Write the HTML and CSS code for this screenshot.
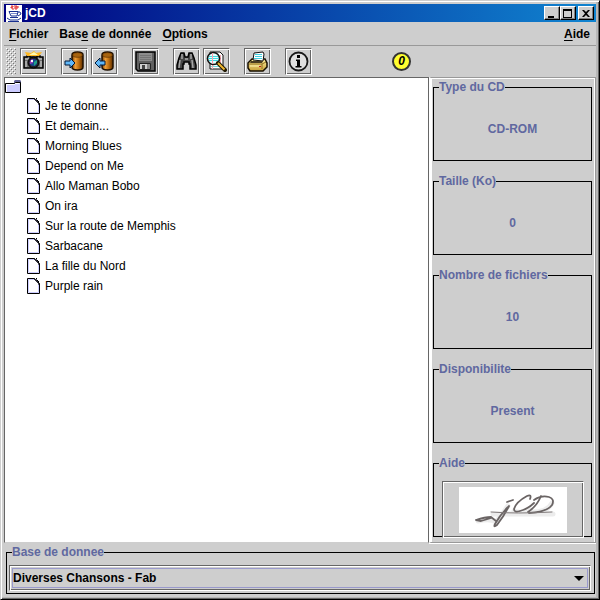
FILE: index.html
```
<!DOCTYPE html>
<html lang="fr">
<head>
<meta charset="utf-8">
<title>jCD</title>
<link rel="stylesheet" href="styles.css">
</head>
<body>
<svg class="defs" aria-hidden="true">
  <defs>
    <linearGradient id="barrel" x1="0" x2="1"><stop offset="0" stop-color="#7a3c00"/><stop offset=".3" stop-color="#f0a038"/><stop offset=".6" stop-color="#c07010"/><stop offset="1" stop-color="#5a2c00"/></linearGradient>
    <linearGradient id="brass" x1="0" x2="0" y1="0" y2="1"><stop offset="0" stop-color="#fff0a0"/><stop offset="1" stop-color="#c8a038"/></linearGradient>
    <symbol id="page" viewBox="0 0 13 16">
      <path d="M.5.5h7l5 5v10H.5z" fill="#fff" stroke="#000"/>
      <path d="M1.500 14.500v-13h6M11.500 6v8.500H2" fill="none" stroke="#ccccff"/>
      <path d="M7 1l5 5V4L9 1z" fill="#9999cc"/>
      <path d="M7 1h1v1h1v1h1v1h1v1h1v2M9.500 0v1.500M10.500 2v1M11.500 3v2" fill="none" stroke="#000"/>
    </symbol>
    <symbol id="cask" viewBox="0 0 13 20">
      <path d="M1 4v12q0 3 5.500 3t5.500-3V4q0-3-5.500-3T1 4z" fill="url(#barrel)" stroke="#201000" stroke-width="1.500"/>
      <ellipse cx="6.500" cy="4" rx="4.800" ry="2.300" fill="#a86410" stroke="#502800" stroke-width=".6"/>
    </symbol>
  </defs>
</svg>
<div class="window">
  <header class="title">
    <svg class="java" width="16" height="17" viewBox="0 0 16 17"><path d="M0 0h16v17H0z" fill="#fff"/><path d="M5 1h2v1H5v1h2v2M8 1h3v1H9v2M12 1v2h-2v2" fill="none" stroke="#e02828"/><path d="M3 6.500h9l-1 4.500H5zM12 7h2l1 2-3 2M4 12.500h8M1 13l3 2h8l3-2" fill="none" stroke="#183090"/><path d="M5 8.500h6" stroke="#7888d0"/><path d="M2 16.500h11" stroke="#183090"/></svg>
    <h1>jCD</h1>
    <div class="controls">
      <button aria-label="Réduire"><svg width="12" height="10"><path d="M2 8h6v2H2z"/></svg></button>
      <button aria-label="Agrandir"><svg width="12" height="10"><path d="M1 1h9v9H1zM2 3v6h7V3z" fill-rule="evenodd"/></svg></button>
      <button class="close" aria-label="Fermer"><svg width="12" height="10"><path d="M2 2h2l2 2 2-2h2L7 5.500 10 9H8L6 7 4 9H2l3-3.500z"/></svg></button>
    </div>
  </header>
  <nav class="menu">
    <button><u>F</u>ichier</button>
    <button>Bas<u>e</u> de donnée</button>
    <button><u>O</u>ptions</button>
    <button class="help"><u>A</u>ide</button>
  </nav>
  <div class="toolbar" role="toolbar">
    <svg class="grip" width="10" height="27"><defs><pattern id="dots" width="4" height="4" patternUnits="userSpaceOnUse"><path d="M0 0h1v1H0zM2 2h1v1H2z" fill="#fff"/><path d="M1 1h1v1H1zM3 3h1v1H3z" fill="#777"/></pattern></defs><path d="M0 0h10v27H0z" fill="url(#dots)"/></svg>
    <div class="group">
      <button aria-label="Photo"><svg width="21" height="21" viewBox="0 0 21 21"><path d="M1 6h3V5h3v1h7V5h3v1h3v11H1z" fill="#707070" stroke="#000" stroke-width="1.500"/><path d="M4 5L2 1l6 1 3-2 2 2 6-1-3 4z" fill="#ffb820"/><path d="M6 4l5-3 4 3z" fill="#fff9b0"/><path d="M2 8h4M15 8h4M3 10v6M18 10v6" stroke="#ddd"/><circle cx="10.500" cy="11.500" r="5.500" fill="#202028" stroke="#000"/><circle cx="10.500" cy="11.500" r="3.600" fill="#184890"/><path d="M10 8a3.500 3.500 0 0 0-3 5l3-1z" fill="#9a3cb8"/><path d="M11 11l3-2v3l-3 3z" fill="#20a088"/><path d="M8 9h2v2H8z" fill="#fff"/></svg></button>
    </div>
    <div class="group">
      <button aria-label="Importer"><svg width="21" height="21" viewBox="0 0 21 21"><use href="#cask" x="7" y="0" width="13" height="20"/><path d="M1 10h5V7l5 5-5 5v-3H1z" fill="#60b8f8" stroke="#001838"/></svg></button>
      <button aria-label="Exporter"><svg width="21" height="21" viewBox="0 0 21 21"><use href="#cask" x="7" y="0" width="13" height="20"/><path d="M11 10H6V7l-5 5 5 5v-3h5z" fill="#60b8f8" stroke="#001838"/></svg></button>
    </div>
    <div class="group">
      <button aria-label="Enregistrer"><svg width="21" height="21" viewBox="0 0 21 21"><path d="M1 1h19v19H3l-2-2z" fill="#606060" stroke="#000" stroke-width="1.500"/><path d="M4 2h13v8H4z" fill="#8c8c8c"/><path d="M5 4.500h11M5 6.500h11M5 8.500h11" stroke="#747474"/><path d="M4.500 12.500h11v6h-11z" fill="#d0d0d0" stroke="#222"/><path d="M7 14h3v4H7z" fill="#444"/><path d="M12 13h3v5h-3z" fill="#888"/></svg></button>
    </div>
    <div class="group">
      <button aria-label="Rechercher"><svg width="21" height="21" viewBox="0 0 21 21"><path d="M5 2h3l1 4h3l1-4h3l2 5 2 7v4h-6v-5h-1v-2h-5v2H7v5H1v-4l2-7z" fill="#454545" stroke="#000" stroke-width="1.500"/><path d="M6 3v5M15 3v5M4 9l-1 8M16 9l1 8" stroke="#a8a8a8" stroke-width="1.500"/><path d="M9 7h3v2H9z" fill="#909090"/></svg></button>
      <button aria-label="Aperçu"><svg width="21" height="21" viewBox="0 0 21 21"><path d="M4 1h10l3 3v14H4z" fill="#fff" stroke="#111"/><path d="M5 13.500h9M5 15.500h9" stroke="#70dce0"/><path d="M6.500 12v6M14.500 4v10" stroke="#f0a8b0"/><circle cx="7.500" cy="7.500" r="6" fill="#e4ffff" stroke="#111" stroke-width="1.600"/><path d="M3 5.500h9M2 7.500h11M3 9.500h9" stroke="#40d8e0"/><path d="M6.500 2v11" stroke="#f8a0b0"/><path d="M12 12l7 7" stroke="#201800" stroke-width="4" stroke-linecap="round"/><path d="M12 12l6.500 6.500" stroke="#f0b830" stroke-width="2"/></svg></button>
    </div>
    <div class="group">
      <button aria-label="Imprimer"><svg width="21" height="21" viewBox="0 0 21 21"><path d="M1 12l4-4h13l2 4v4l-4 4H3l-2-3z" fill="url(#brass)" stroke="#181000" stroke-width="1.500"/><path d="M6 9l1-7 9-1 1 2-1 7z" fill="#fff" stroke="#111"/><path d="M8 3.500h7M8 5.500h7M7 7.500h8" stroke="#40d0e0"/><path d="M4 10h12l-1 2H3z" fill="#493c20"/><path d="M2 13h13v5M15 13l4-2" fill="none" stroke="#907020"/><path d="M3 15h10" stroke="#fff4b0"/><path d="M12 15h2v1h-2z" fill="#c02020"/></svg></button>
    </div>
    <div class="group">
      <button aria-label="Informations"><svg width="21" height="21" viewBox="0 0 21 21"><circle cx="10.500" cy="10.500" r="9" fill="#e0e0e0" stroke="#181818" stroke-width="1.800"/><path d="M9 4h3v3H9zM8 8.500h4V15h1.500v1.500H7.500V15H9v-5H8z"/></svg></button>
    </div>
    <output class="count">0</output>
  </div>
  <main>
    <section class="tree">
      <svg class="folder" width="17" height="14" viewBox="0 0 17 14"><path d="M9 1l1-1h5l1 1v3H9z" fill="#666699"/><path d="M.5 3.500h9l1-1h5v10H.5z" fill="#ccccff" stroke="#000"/><path d="M1.500 12V4.500h8l1-1h4" fill="none" stroke="#fff"/></svg>
      <ul>
        <li><svg width="13" height="16"><use href="#page"/></svg>Je te donne</li>
        <li><svg width="13" height="16"><use href="#page"/></svg>Et demain...</li>
        <li><svg width="13" height="16"><use href="#page"/></svg>Morning Blues</li>
        <li><svg width="13" height="16"><use href="#page"/></svg>Depend on Me</li>
        <li><svg width="13" height="16"><use href="#page"/></svg>Allo Maman Bobo</li>
        <li><svg width="13" height="16"><use href="#page"/></svg>On ira</li>
        <li><svg width="13" height="16"><use href="#page"/></svg>Sur la route de Memphis</li>
        <li><svg width="13" height="16"><use href="#page"/></svg>Sarbacane</li>
        <li><svg width="13" height="16"><use href="#page"/></svg>La fille du Nord</li>
        <li><svg width="13" height="16"><use href="#page"/></svg>Purple rain</li>
      </ul>
    </section>
    <aside>
      <fieldset><legend>Type du CD</legend><p>CD-ROM</p></fieldset>
      <fieldset><legend>Taille (Ko)</legend><p>0</p></fieldset>
      <fieldset><legend>Nombre de fichiers</legend><p>10</p></fieldset>
      <fieldset><legend>Disponibilite</legend><p>Present</p></fieldset>
      <fieldset class="about"><legend>Aide</legend>
        <button aria-label="jCD"><svg width="108" height="46" viewBox="0 0 108 46"><path d="M0 0h108v46H0z" fill="#fff"/><g fill="none" stroke-linecap="round" stroke-linejoin="round"><g stroke="#ececec" stroke-width="5"><path d="M19 34q12-3 18 1 6-7 12-16M55 24q6 3 16-1M73 25q16 0 20-9M34 27h60"/></g><g stroke="#6a6464" stroke-width="1.800"><path d="M48 15l6-2M17 33q9-3 15-3l5 4M17 33l5 1 10-3M50 19Q45 29 38 38q-4 3-2-1 5-9 13-17"/><path d="M71 12q2-5-3-3-11 6-13 13 0 4 6 2 8-2 14-8M82 9q-4 10-13 16M75 13q7-5 15-3 6 2 3 8-5 7-23 8"/></g><path d="M32 25q25 2 61 0" stroke="#807a7a"/></g></svg></button>
      </fieldset>
    </aside>
  </main>
  <footer>
    <fieldset><legend><label for="base">Base de donnee</label></legend>
      <div class="combo">
        <select id="base"><option>Diverses Chansons - Fab</option></select>
        <svg width="10" height="5"><path d="M0 0h10L5 5z"/></svg>
      </div>
    </fieldset>
  </footer>
</div>
</body>
</html>
```
FILE: styles.css
```
* { box-sizing: border-box; }
body {
  margin: 0;
  font: bold 12px/15px "Liberation Sans", Arial, sans-serif;
  color: #000;
  background: #cecece;
}
button, select { font: inherit; color: inherit; background: none; border: 0; margin: 0; padding: 0; }
svg { display: block; flex: none; }
.defs { position: absolute; width: 0; height: 0; }
.window {
  display: flex;
  flex-direction: column;
  min-height: 100vh;
  padding: 3px;
  border: 1px solid #cecece;
  border-right-color: #000;
  border-bottom-color: #000;
  box-shadow: inset 1px 1px #fff, inset -1px -1px #666, inset -3px -2px #b8b8b8;
}
.title {
  display: flex;
  align-items: center;
  height: 18px;
  padding: 0 2px;
  gap: 3px;
  color: #fff;
  background: linear-gradient(90deg, #000080, #1084d0);
}
h1 { margin: 0; font: inherit; }
.controls { display: flex; margin-left: auto; }
.controls button {
  width: 16px;
  height: 14px;
  padding: 1px;
  background: #cecece;
  border: 1px solid;
  border-color: #fff #000 #000 #fff;
  box-shadow: inset -1px -1px #808080;
}
.controls .close { margin-left: 2px; }
.menu {
  display: flex;
  align-items: center;
  gap: 11px;
  height: 24px;
  padding: 2px 6px 0 5px;
  border-bottom: 1px solid #999;
}
.menu u { text-underline-offset: 2px; }
.help { margin-left: auto; }
.toolbar { display: flex; align-items: center; height: 31px; padding-left: 2px; }
.grip { margin-right: 4px; }
.group { display: flex; gap: 3px; margin-right: 14px; }
.group button, .about button {
  display: flex;
  align-items: center;
  justify-content: center;
  border: 1px solid;
  border-color: #666 #fff #fff #666;
  box-shadow: inset 1px 1px #fff, inset -1px -1px #666;
}
.group button { width: 27px; height: 27px; }
.count {
  width: 19px;
  height: 19px;
  margin-left: 66px;
  border: 2px solid #333;
  border-radius: 50%;
  background: #ffff30;
  font-style: italic;
  text-align: center;
}
main { display: flex; flex: 1; }
.tree {
  flex: 1;
  padding-top: 2px;
  background: #fff;
  border: 1px solid #666;
  border-bottom-color: #cecece;
}
ul { margin: 2px 0 0; padding: 0 0 0 22px; list-style: none; font-weight: normal; }
li { display: flex; align-items: center; gap: 5px; height: 20px; }
aside {
  display: flex;
  flex-direction: column;
  gap: 13px;
  width: 167px;
  padding: 2px 3px 4px 1px;
  border: 1px solid #999;
  border-left: 2px solid #999;
  border-left-color: #fff;
  box-shadow: inset 1px 1px #fff, inset -1px 0 #fff, 0 1px #fff;
}
fieldset { min-width: 0; margin: 0; padding: 0 5px; border: 1px solid #000; }
aside fieldset { height: 81px; margin-left: 1px; }
legend { padding: 0; color: #6068a0; }
p { margin: 27px 0 0; text-align: center; color: #6068a0; }
.about { padding-top: 10px; }
.about button { width: 142px; height: 57px; margin: 0 auto; }
footer { padding: 2px 1px 2px 2px; }
footer fieldset { padding: 5px 3px 2px 5px; }
.combo {
  position: relative;
  margin-left: -3px;
  border: 1px solid;
  border-color: #666 #fff #fff #666;
  box-shadow: inset 1px 1px #fff, inset -1px -1px #666;
  padding: 2px;
}
.combo select {
  display: block;
  width: 100%;
  height: 20px;
  appearance: none;
  border: 1px solid #9999cc;
}
.combo svg { position: absolute; right: 6px; top: 10px; pointer-events: none; }
```
